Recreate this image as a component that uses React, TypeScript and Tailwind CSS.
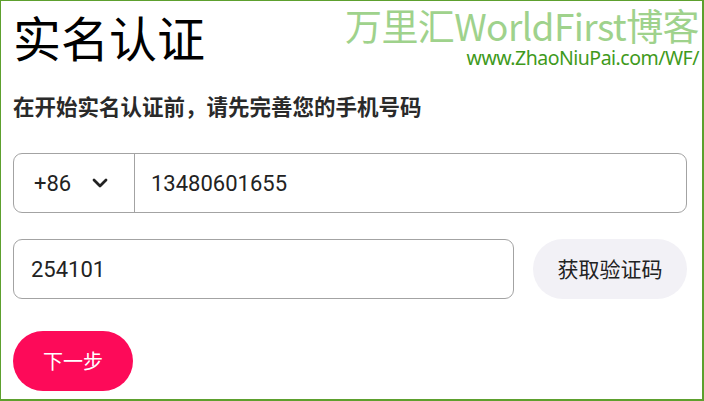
import { ChevronDown } from "lucide-react";

const sans = "font-['Roboto','Noto_Sans_CJK_SC',sans-serif]";

export default function App() {
  return (
    <div className={`w-[704px] h-[401px] bg-white border border-b-2 border-r-2 border-[#5da02e] overflow-hidden ${sans}`}>
      <div className="flex justify-between items-start">
        <h1 className="pl-3 pt-[4px] text-[48px] leading-[62px] text-black font-['Noto_Sans_CJK_SC',sans-serif] font-normal">
          实名认证
        </h1>
        <div className="flex flex-col items-end pr-[3px] pt-[2px]">
          <span className="text-[37px] leading-[44px] text-[#9fd28c] font-['Noto_Sans_CJK_SC',sans-serif] tracking-[-0.6px]">
            万里汇WorldFirst博客
          </span>
          <span className="text-[19.5px] leading-[22px] text-[#3f9a1c] font-['Noto_Sans',sans-serif] tracking-[-0.5px]">
            www.ZhaoNiuPai.com/WF/
          </span>
        </div>
      </div>

      <div className="px-3 pt-[22px]">
        <p className="text-[21.5px] leading-[30px] font-bold text-[#2a2a2a] font-['Noto_Sans_CJK_SC',sans-serif]">
          在开始实名认证前，请先完善您的手机号码
        </p>

        <div className="mt-[32px] mr-[3px] h-[60px] flex items-stretch border border-[#a3a3a3] rounded-[9px]">
          <div className="w-[121px] flex items-center justify-between pl-5 pr-[22px] border-r border-[#a3a3a3]">
            <span className="text-[22px] text-[#222]">+86</span>
            <ChevronDown className="w-6 h-6 text-[#222]" strokeWidth={2.8} />
          </div>
          <div className="flex items-center pl-4 text-[22px] text-[#222]">13480601655</div>
        </div>

        <div className="mt-[26px] mr-[3px] flex items-center gap-[19px]">
          <div className="flex-1 h-[60px] flex items-center pl-[17px] border border-[#a3a3a3] rounded-[9px] text-[22px] text-[#222]">
            254101
          </div>
          <button className="w-[154px] h-[60px] rounded-full bg-[#f2f1f6] text-[21px] text-[#222] font-['Noto_Sans_CJK_SC',sans-serif]">
            获取验证码
          </button>
        </div>

        <button className="mt-[32px] w-[120px] h-[60px] rounded-full bg-[#fd0a59] text-white text-[20px] font-['Noto_Sans_CJK_SC',sans-serif]">
          下一步
        </button>
      </div>
    </div>
  );
}
